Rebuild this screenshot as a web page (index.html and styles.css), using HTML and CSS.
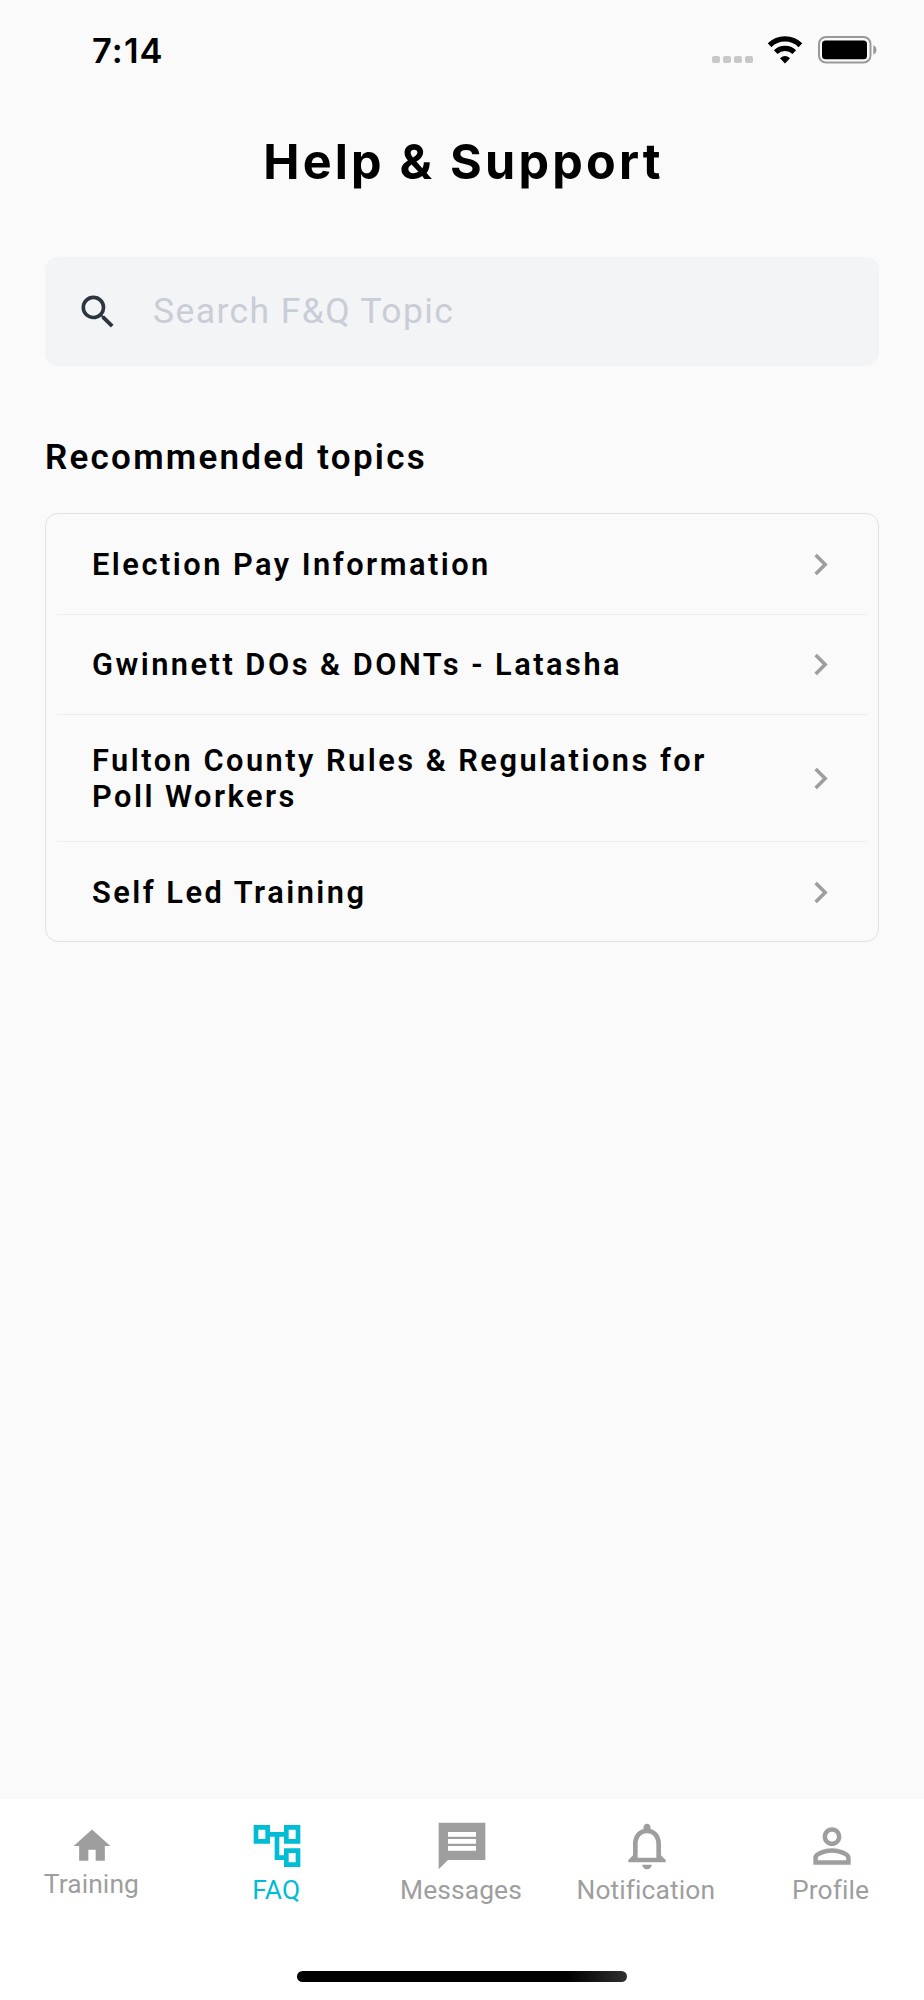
FILE: index.html
```
<!DOCTYPE html>
<html lang="en">
<head>
    <meta charset="UTF-8">
    <meta name="viewport" content="width=device-width, initial-scale=1.0">
    <title>Help & Support</title>
    <link rel="stylesheet" href="styles.css">
</head>
<body>

<div class="screen">
    <!-- Status bar -->
    <div class="status-bar">
        <span class="time">7:14</span>
        <div class="status-icons">
            <div class="signal"><i></i><i></i><i></i><i></i></div>
            <svg class="wifi" viewBox="0 0 36 28">
                <path d="M2.6 9.2a22 22 0 0 1 30.8 0" fill="none" stroke="#000" stroke-width="5.4"/>
                <path d="M8.7 16.2a13.4 13.4 0 0 1 18.6 0" fill="none" stroke="#000" stroke-width="5.2"/>
                <path d="M18 27.4l-5-5.2q5-4.4 10 0z"/>
            </svg>
            <svg class="battery" viewBox="0 0 60 28">
                <rect x="1" y="1" width="51.5" height="25.6" rx="7" fill="none" stroke="#999" stroke-width="2"/>
                <rect x="4" y="4.5" width="45" height="18.8" rx="3.5"/>
                <path d="M55.3 9.3q3.1 1.4 3.1 4.6t-3.1 4.6z" fill="#999"/>
            </svg>
        </div>
    </div>

    <h1>Help &amp; Support</h1>

    <div class="search">
        <svg viewBox="0 0 24 24"><path d="M15.5 14h-.79l-.28-.27A6.471 6.471 0 0 0 16 9.5 6.5 6.5 0 1 0 9.5 16c1.61 0 3.09-.59 4.23-1.57l.27.28v.79l5 4.99L20.49 19l-4.99-5zm-6 0C7.01 14 5 11.99 5 9.5S7.01 5 9.5 5 14 7.01 14 9.5 11.99 14 9.5 14z"/></svg>
        <input type="text" placeholder="Search F&amp;Q Topic">
    </div>

    <h2>Recommended topics</h2>

    <div class="topics">
        <div class="topic">
            <span>Election Pay Information</span>
            <svg viewBox="0 0 24 24"><path d="M10 6L8.59 7.41 13.17 12l-4.58 4.59L10 18l6-6z"/></svg>
        </div>
        <div class="topic">
            <span>Gwinnett DOs &amp; DONTs - Latasha</span>
            <svg viewBox="0 0 24 24"><path d="M10 6L8.59 7.41 13.17 12l-4.58 4.59L10 18l6-6z"/></svg>
        </div>
        <div class="topic tall">
            <span>Fulton County Rules &amp; Regulations for<br>Poll Workers</span>
            <svg viewBox="0 0 24 24"><path d="M10 6L8.59 7.41 13.17 12l-4.58 4.59L10 18l6-6z"/></svg>
        </div>
        <div class="topic">
            <span>Self Led Training</span>
            <svg viewBox="0 0 24 24"><path d="M10 6L8.59 7.41 13.17 12l-4.58 4.59L10 18l6-6z"/></svg>
        </div>
    </div>

    <!-- Bottom navigation -->
    <div class="bottom">
        <div class="nav">
            <a class="small">
                <svg viewBox="0 0 24 24"><path d="M10 20v-6h4v6h5v-8h3L12 3 2 12h3v8z"/></svg>
                <span>Training</span>
            </a>
            <a class="active">
                <svg viewBox="0 0 24 24"><path d="M22 11V3h-7v3H9V3H2v8h7V8h2v10h4v3h7v-8h-7v3h-2V8h2v3h7zM7 9H4V5h3v4zm10 6h3v4h-3v-4zm0-10h3v4h-3V5z"/></svg>
                <span>FAQ</span>
            </a>
            <a>
                <svg viewBox="0 0 24 24"><path d="M22 2H2v20l4-4h16V2zm-4 12H6v-2h12v2zm0-3H6V9h12v2zm0-3H6V6h12v2z"/></svg>
                <span>Messages</span>
            </a>
            <a>
                <svg viewBox="0 0 24 24"><path d="M12 22c1.1 0 2-.9 2-2h-4c0 1.1.9 2 2 2zm6-6v-5c0-3.07-1.63-5.64-4.5-6.32V4c0-.83-.67-1.5-1.5-1.5s-1.5.67-1.5 1.5v.68C7.64 5.36 6 7.92 6 11v5l-2 2v1h16v-1l-2-2zm-2 1H8v-6c0-2.48 1.51-4.5 4-4.5s4 2.02 4 4.5v6z"/></svg>
                <span>Notification</span>
            </a>
            <a>
                <svg viewBox="0 0 24 24"><path d="M12 5.9a2.1 2.1 0 1 1 0 4.2 2.1 2.1 0 0 1 0-4.2m0 9c2.97 0 6.1 1.46 6.1 2.1v1.1H5.9V17c0-.64 3.13-2.1 6.1-2.1M12 4C9.79 4 8 5.79 8 8s1.79 4 4 4 4-1.79 4-4-1.79-4-4-4zm0 9c-2.67 0-8 1.34-8 4v3h16v-3c0-2.66-5.33-4-8-4z"/></svg>
                <span>Profile</span>
            </a>
        </div>
        <div class="home-indicator"></div>
    </div>
</div>

</body>
</html>
```
FILE: styles.css
```
* {
    box-sizing: border-box;
}
body {
    margin: 0;
    font-family: Roboto, sans-serif;
    background: #fafafa;
    color: #000;
}
svg {
    display: block;
    flex: none;
}
.screen {
    display: flex;
    flex-direction: column;
    width: 924px;
    height: 2000px;
}
.status-bar {
    display: flex;
    justify-content: space-between;
    height: 100px;
    padding: 31px 46px 0 92px;
}
.time {
    font-family: Inter, sans-serif;
    font-size: 34.5px;
    font-weight: 600;
    line-height: 40px;
    letter-spacing: 1.1px;
}
.status-icons {
    display: flex;
    padding-top: 5px;
}
.signal {
    display: flex;
    gap: 3.4px;
    margin: 20px 14px 0 0;
}
.signal i {
    width: 7.7px;
    height: 7.3px;
    background: #c8c8c8;
    border-radius: 2px;
}
.wifi {
    width: 36px;
    height: 28px;
    margin-right: 15px;
}
.battery {
    width: 60px;
    height: 28px;
}
h1 {
    margin: 0;
    height: 157px;
    padding: 32px 0 0 3px;
    font-family: Inter, sans-serif;
    font-size: 48.5px;
    font-weight: 700;
    line-height: 60px;
    letter-spacing: 3.2px;
    text-align: center;
}
.search {
    display: flex;
    align-items: center;
    gap: 33px;
    height: 109px;
    margin: 0 45px;
    padding: 0 31px;
    background: #f3f4f6;
    border-radius: 13px;
}
.search svg {
    width: 44px;
    height: 44px;
    fill: #2d3540;
}
.search input {
    flex: 1;
    min-width: 0;
    padding: 0 0 1px;
    border: none;
    outline: none;
    background: none;
    font-family: Roboto, sans-serif;
    font-size: 35.5px;
    letter-spacing: 1.4px;
}
.search input::placeholder {
    color: #c9cdd5;
}
h2 {
    margin: 71px 45px 35px;
    font-size: 35px;
    font-weight: 600;
    line-height: 41px;
    letter-spacing: 2.25px;
}
.topics {
    height: 429px;
    margin: 0 45px;
    padding: 0 11px;
    border: 1.5px solid #e2e2e2;
    border-radius: 13px;
}
.topic {
    display: flex;
    align-items: center;
    justify-content: space-between;
    height: 100.5px;
    padding: 0 25px 0 35px;
    font-size: 30.8px;
    font-weight: 600;
    line-height: 36px;
    letter-spacing: 2.48px;
}
.topic:first-child {
    height: 99.5px;
}
.topic:first-child,
.topic:last-child {
    padding-top: 2px;
}
.topic span {
    padding-top: 1px;
}
.topic + .topic {
    border-top: 1px solid #eee;
}
.topic.tall {
    height: 127px;
}
.topic svg {
    width: 43px;
    height: 43px;
    fill: #9e9e9e;
}
.bottom {
    height: 201px;
    margin-top: auto;
    background: #fff;
}
.nav {
    display: flex;
    height: 172px;
}
.nav a {
    display: flex;
    flex: 1;
    flex-direction: column;
    align-items: center;
    padding-top: 19px;
    color: #9e9e9e;
    font-size: 26.4px;
    line-height: 32px;
    letter-spacing: 0.1px;
}
.nav a.small {
    padding-top: 25px;
}
.nav span {
    margin-right: 2px;
}
.nav svg {
    width: 56px;
    height: 56px;
    fill: currentColor;
}
.nav .small svg {
    width: 44px;
    height: 44px;
}
.nav .active {
    color: #00bcd4;
}
.home-indicator {
    width: 330px;
    height: 11px;
    margin-left: 297px;
    border-radius: 6px;
    background: linear-gradient(to right, #000 82%, #303030);
}
```
